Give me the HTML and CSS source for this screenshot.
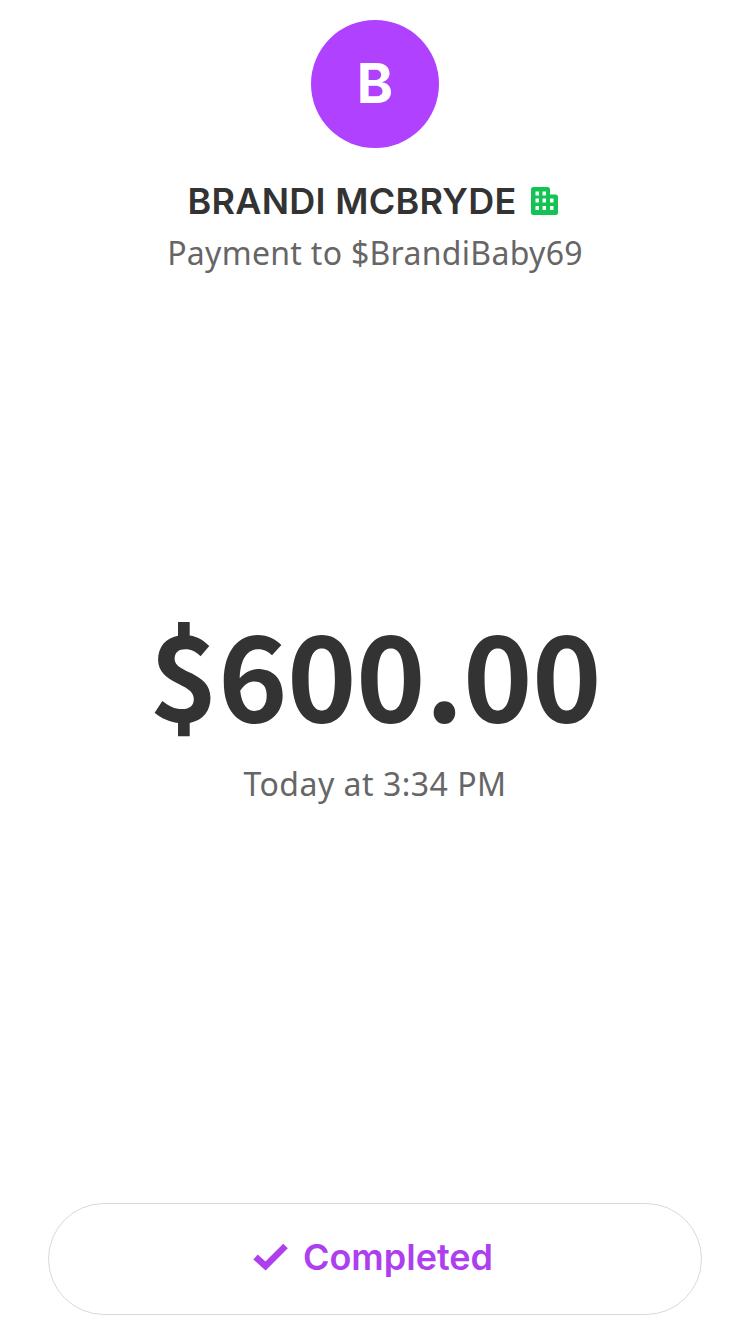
FILE: index.html
```html
<!DOCTYPE html>
<html lang="en">
<head>
<meta charset="utf-8">
<title>Payment</title>
<link rel="stylesheet" href="styles.css">
</head>
<body>
<main class="screen">
  <header class="payee">
    <div class="avatar"><span class="initial">B</span></div>
    <h1 class="name"><span class="name-text">BRANDI MCBRYDE</span>
      <svg class="business" viewBox="0 0 28 30" aria-hidden="true"><path fill="#13c455" fill-rule="evenodd" d="M2.500 1H16.500Q19 1 19 3.500V8.500H24.500Q27 8.500 27 11V26.500Q27 29 24.500 29H2.500Q0 29 0 26.500V3.500Q0 1 2.500 1ZM4.500 5.500V9.500H8V5.500ZM11.500 5.500V9.500H15V5.500ZM4.500 12.500V16.500H8V12.500ZM11.500 12.500V16.500H15V12.500ZM19 12.500V16.500H22.500V12.500ZM4.500 20V24H8V20ZM11.500 20V24H15V20ZM19 20V24H22.500V20Z"/></svg>
    </h1>
    <p class="note"><span class="note-text">Payment to $BrandiBaby69</span></p>
  </header>
  <section class="summary">
    <div class="amount"><span class="amount-text">$600.00</span></div>
    <p class="time"><span class="time-text">Today at 3:34 PM</span></p>
  </section>
  <button class="status">
    <svg class="check" viewBox="0 0 36 28" aria-hidden="true"><path d="M2.500 14L12.500 23L32.500 3" fill="none" stroke="#ae3fee" stroke-width="6.500"/></svg>
    <span class="status-text">Completed</span>
  </button>
</main>
</body>
</html>
```
FILE: styles.css
```css
* { box-sizing: border-box; }
body { margin: 0; background: #fff; }
h1, p { margin: 0; }
.screen {
  height: 1340px;
  padding: 20px 48px 25px;
  display: flex;
  flex-direction: column;
  font-family: "Inter", sans-serif;
  color: #333;
}
.payee { display: flex; flex-direction: column; align-items: center; }
.avatar {
  width: 128px; height: 128px; border-radius: 50%;
  background: #b041ff; color: #fff;
  display: flex; align-items: center; justify-content: center;
  font-size: 55px; line-height: 66px; font-weight: 700;
}
.initial { padding-bottom: 2px; }
.name {
  margin-top: 31px; height: 44px; padding-right: 4px;
  display: flex; align-items: center; gap: 14px;
  font-size: 36px; font-weight: 600; line-height: 44px; letter-spacing: 0.28px; white-space: nowrap;
}
.business { width: 28px; height: 30px; }
.note { margin-top: 9px; }
.note, .time {
  font-family: "Noto Sans", sans-serif;
  font-size: 32px; line-height: 42px; letter-spacing: 0.3px; color: #666;
}
.summary { margin-top: 322px; text-align: center; }
.amount {
  font-family: "Noto Sans CJK SC", sans-serif;
  font-size: 118px; line-height: 150px; font-weight: 700; letter-spacing: -0.6px;
}
.time { margin-top: 17px; letter-spacing: 0.5px; }
.status {
  margin-top: auto; height: 112px; padding: 0 4px 4px 0;
  border: 1px solid #d9d9d9; border-radius: 56px; background: #fff;
  display: flex; align-items: center; justify-content: center; gap: 14px;
  font: 600 36px/44px "Inter", sans-serif; color: #ae3fee;
}
.check { width: 36px; height: 28px; }
```
